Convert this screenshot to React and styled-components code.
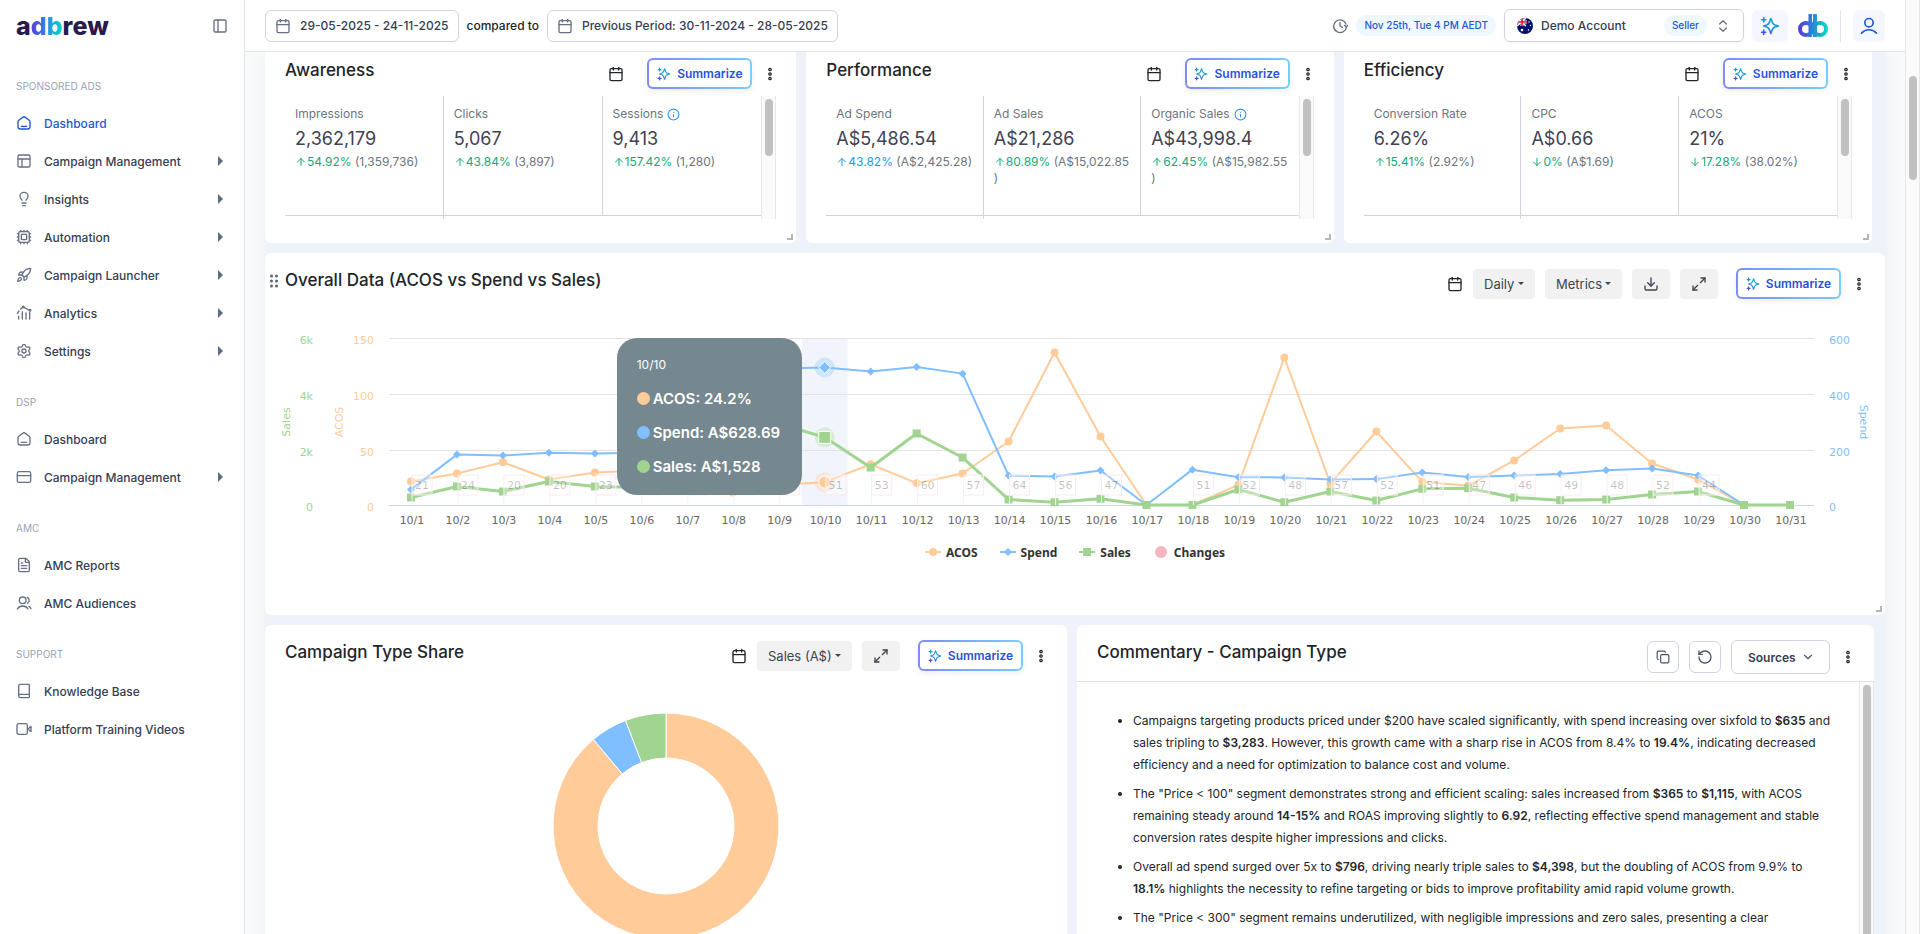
import React, { useLayoutEffect, useRef, useState } from 'react'
import styled, { createGlobalStyle } from 'styled-components'
import {
  ArrowDown,
  ArrowUp,
  Book,
  Calendar,
  ChevronDown,
  ChevronsUpDown,
  Copy,
  Cpu,
  Download,
  FileText,
  Info,
  Lightbulb,
  Maximize2,
  PanelLeft,
  PanelsTopLeft,
  Rocket,
  RotateCcw,
  Settings,
} from 'lucide-react'

const GlobalStyle = createGlobalStyle`
* {
  box-sizing: border-box;
}
body {
  margin: 0;
  font-family: Inter, "Liberation Sans", sans-serif;
  color: #212529;
}
button, select {
  font-family: inherit;
  margin: 0;
}
`

/* ---------- icons ---------- */

const stroke = {
  fill: 'none',
  stroke: 'currentColor',
  strokeWidth: 2,
  strokeLinecap: 'round',
  strokeLinejoin: 'round',
}

function HomeIcon() {
  return (
    <svg width="16" height="16" viewBox="0 0 24 24" {...stroke} aria-hidden="true">
      <path d="M8 17h8M11 2.8 4.2 8C3.4 8.7 3 9.300 3 10.500V17.800C3 20.300 3.700 21 6.200 21h11.600c2.500 0 3.200-.7 3.200-3.200v-7.300c0-1.200-.4-1.800-1.200-2.500L13 2.800c-.7-.6-1.300-.6-2 0z" />
    </svg>
  )
}

function CardIcon() {
  return (
    <svg width="16" height="16" viewBox="0 0 24 24" {...stroke} aria-hidden="true">
      <rect x="2" y="4" width="20" height="16" rx="2.500" />
      <path d="M2 10h20" />
    </svg>
  )
}

function AnalyticsIcon() {
  return (
    <svg width="16" height="16" viewBox="0 0 24 24" {...stroke} aria-hidden="true">
      <path d="M4 21v-4M9.500 21V10M15 21v-9M20.500 21V11M2 12.500 4.500 9M7 6l3-2.500M13 4l6 3.500" />
      <circle cx="11" cy="3" r="1.300" />
      <circle cx="21" cy="8" r="1.300" />
    </svg>
  )
}

function AudienceIcon() {
  return (
    <svg width="16" height="16" viewBox="0 0 24 24" {...stroke} aria-hidden="true">
      <circle cx="10" cy="8" r="5" />
      <path d="M17 3.500a5 5 0 0 1 0 9M2 21c1.500-3 4.500-4.500 8-4.500s6.500 1.500 8 4.500M19.500 17c1.300.8 2.300 2 3 3.500" />
    </svg>
  )
}

function VideoIcon() {
  return (
    <svg width="16" height="16" viewBox="0 0 24 24" {...stroke} aria-hidden="true">
      <rect x="1.500" y="4" width="15.500" height="16" rx="2.500" />
      <path d="m18 12 4.500-4v8z" />
    </svg>
  )
}

function ClockIcon() {
  return (
    <svg width="16" height="16" viewBox="0 0 24 24" {...stroke} aria-hidden="true">
      <path d="M21.500 13.500a9.500 9.500 0 1 1-.5-4.500M23.500 11l-2.200 2.500L18.800 11M12 6.500V12l3.500 2" />
    </svg>
  )
}

function ProfileIcon() {
  return (
    <svg width="20" height="20" viewBox="0 0 24 24" {...stroke} aria-hidden="true">
      <circle cx="12" cy="8" r="5" />
      <path d="M3 20.500c2.300-2.500 5.500-4 9-4s6.700 1.500 9 4" />
    </svg>
  )
}

function SparkIcon({ size = 16, id }) {
  return (
    <svg width={size} height={size} viewBox="0 0 24 24" aria-hidden="true">
      <defs>
        <linearGradient id={id} x1="0" y1="24" x2="16" y2="4" gradientUnits="userSpaceOnUse">
          <stop offset="0" stopColor="#5b21e6" />
          <stop offset="0.500" stopColor="#2f86d8" />
          <stop offset="1" stopColor="#06a8cf" />
        </linearGradient>
      </defs>
      <path
        d="M4.500 22v-5M4.500 7V2M2 4.500h5M2 19.500h5M13 3l-1.700 4.500c-.4 1-.6 1.300-1.500 2.200-.6.600-1 .8-1.800 1.100L4.500 12 8 13.200c.8.300 1.200.5 1.800 1.100.900.900 1.100 1.200 1.500 2.200L13 21l1.700-4.500c.4-1 .6-1.300 1.500-2.200.6-.6 1-.8 1.800-1.100L22 12l-4-1.200c-.8-.3-1.200-.5-1.800-1.100-.9-.9-1.100-1.200-1.500-2.200z"
        fill="none"
        stroke={`url(#${id})`}
        strokeWidth="2"
        strokeLinecap="round"
        strokeLinejoin="round"
      />
    </svg>
  )
}

function BrandMark() {
  return (
    <Mark width="30" height="24" viewBox="0 0 30 24" aria-hidden="true">
      <defs>
        <linearGradient id="mark" x1="0" y1="0" x2="30" y2="0" gradientUnits="userSpaceOnUse">
          <stop offset="0" stopColor="#5a35e0" />
          <stop offset="0.450" stopColor="#2e7fd6" />
          <stop offset="1" stopColor="#05e0c8" />
        </linearGradient>
      </defs>
      <g fill="none" stroke="url(#mark)" strokeWidth="4">
        <circle cx="8" cy="15" r="6" />
        <circle cx="22" cy="15" r="6" />
      </g>
      <g fill="url(#mark)">
        <rect x="10.500" y="0" width="3.500" height="23" rx=".5" />
        <rect x="15" y="0" width="4" height="23" rx=".5" />
        <path d="M13 7l4 3v8l-4 4z" />
      </g>
    </Mark>
  )
}

function FlagIcon() {
  return (
    <svg width="16" height="16" viewBox="0 0 16 16" aria-hidden="true">
      <clipPath id="flag">
        <circle cx="8" cy="8" r="8" />
      </clipPath>
      <g clipPath="url(#flag)">
        <rect width="16" height="16" fill="#00106b" />
        <path d="M0 0l9 8M9 0 0 8" stroke="#fff" strokeWidth="1.500" />
        <path d="M5 0v8M0 4h10" stroke="#fff" strokeWidth="3" />
        <path d="M5 0v8M0 4h10" stroke="#e0162b" strokeWidth="1.600" />
        <circle cx="5" cy="12" r="1.300" fill="#fff" />
        <circle cx="12" cy="4" r=".7" fill="#fff" />
        <circle cx="13.500" cy="7.500" r=".7" fill="#fff" />
        <circle cx="11.500" cy="12" r=".8" fill="#fff" />
      </g>
    </svg>
  )
}

function DotsIcon() {
  return (
    <svg width="4" height="14" viewBox="0 0 4 14" fill="none" stroke="#212529" strokeWidth="1.300" aria-hidden="true">
      <circle cx="2" cy="2.500" r="1.200" />
      <circle cx="2" cy="7" r="1.200" />
      <circle cx="2" cy="11.500" r="1.200" />
    </svg>
  )
}

/* ---------- sidebar ---------- */

const menu = [
  {
    label: 'SPONSORED ADS',
    items: [
      { text: 'Dashboard', icon: <HomeIcon />, active: true },
      { text: 'Campaign Management', icon: <PanelsTopLeft size={16} />, more: true },
      { text: 'Insights', icon: <Lightbulb size={16} />, more: true },
      { text: 'Automation', icon: <Cpu size={16} />, more: true },
      { text: 'Campaign Launcher', icon: <Rocket size={16} />, more: true },
      { text: 'Analytics', icon: <AnalyticsIcon />, more: true },
      { text: 'Settings', icon: <Settings size={16} />, more: true },
    ],
  },
  {
    label: 'DSP',
    items: [
      { text: 'Dashboard', icon: <HomeIcon /> },
      { text: 'Campaign Management', icon: <CardIcon />, more: true },
    ],
  },
  {
    label: 'AMC',
    items: [
      { text: 'AMC Reports', icon: <FileText size={16} /> },
      { text: 'AMC Audiences', icon: <AudienceIcon /> },
    ],
  },
  {
    label: 'SUPPORT',
    items: [
      { text: 'Knowledge Base', icon: <Book size={16} /> },
      { text: 'Platform Training Videos', icon: <VideoIcon /> },
    ],
  },
]

function SideMenu() {
  return (
    <Sidebar>
      <SidebarTop>
        <Wordmark href="#">
          a<Tint>db</Tint>rew
        </Wordmark>
        <PlainButton aria-label="Collapse sidebar">
          <PanelLeft size={16} color="#667085" />
        </PlainButton>
      </SidebarTop>
      <nav>
        {menu.map((group) => (
          <MenuGroup key={group.label}>
            <MenuLabel>{group.label}</MenuLabel>
            {group.items.map((item) => (
              <MenuLink key={item.text} href="#" $active={item.active}>
                {item.icon}
                <MenuText>{item.text}</MenuText>
                {item.more && <MoreArrow />}
              </MenuLink>
            ))}
          </MenuGroup>
        ))}
      </nav>
    </Sidebar>
  )
}

/* ---------- top bar ---------- */

function TopBar() {
  return (
    <Topbar>
      <DateButton>
        <Calendar size={16} color="#667085" />
        29-05-2025 - 24-11-2025
      </DateButton>
      <Compared>compared to</Compared>
      <DateButton>
        <Calendar size={16} color="#667085" />
        Previous Period: 30-11-2024 - 28-05-2025
      </DateButton>
      <TopRight>
        <ClockIcon />
        <Pill>Nov 25th, Tue 4 PM AEDT</Pill>
        <AccountBox>
          <FlagIcon />
          <AccountSelect aria-label="Account">
            <option>Demo Account</option>
          </AccountSelect>
          <Pill>Seller</Pill>
          <ChevronsUpDown size={16} color="#667085" />
        </AccountBox>
        <SoftButton $width={36} aria-label="Assistant">
          <SparkIcon size={20} id="spark-top" />
        </SoftButton>
        <BrandMark />
        <Divider />
        <SoftButton $width={32} aria-label="Profile">
          <ProfileIcon />
        </SoftButton>
      </TopRight>
    </Topbar>
  )
}

/* ---------- cards ---------- */

function Summarize({ id, $wide }) {
  return (
    <SummarizeButton $wide={$wide}>
      <SparkIcon size={14} id={id} />
      Summarize
    </SummarizeButton>
  )
}

function MoreButton() {
  return (
    <PlainButton aria-label="More options">
      <DotsIcon />
    </PlainButton>
  )
}

const metrics = [
  {
    title: 'Awareness',
    items: [
      { name: 'Impressions', value: '2,362,179', delta: '54.92%', prev: '(1,359,736)' },
      { name: 'Clicks', value: '5,067', delta: '43.84%', prev: '(3,897)' },
      { name: 'Sessions', value: '9,413', delta: '157.42%', prev: '(1,280)', info: true },
    ],
  },
  {
    title: 'Performance',
    items: [
      { name: 'Ad Spend', value: 'A$5,486.54', delta: '43.82%', prev: '(A$2,425.28)', color: '#119ef0' },
      { name: 'Ad Sales', value: 'A$21,286', delta: '80.89%', prev: '(A$15,022.85)' },
      { name: 'Organic Sales', value: 'A$43,998.4', delta: '62.45%', prev: '(A$15,982.55)', info: true },
    ],
  },
  {
    title: 'Efficiency',
    items: [
      { name: 'Conversion Rate', value: '6.26%', delta: '15.41%', prev: '(2.92%)' },
      { name: 'CPC', value: 'A$0.66', down: true, delta: '0%', prev: '(A$1.69)' },
      { name: 'ACOS', value: '21%', down: true, delta: '17.28%', prev: '(38.02%)' },
    ],
  },
]

function MetricCard({ data }) {
  return (
    <Card $flat>
      <CardHead $tight>
        <Title>{data.title}</Title>
        <Tools>
          <PlainButton aria-label="Choose dates">
            <Calendar size={16} />
          </PlainButton>
          <Summarize id={`spark-${data.title}`} $wide />
          <MoreButton />
        </Tools>
      </CardHead>
      <MetricArea>
        <MetricGrid>
          {data.items.map((m) => (
            <Metric key={m.name}>
              <MetricName>
                {m.name}
                {m.info && <Info size={13} color="#2f8fff" />}
              </MetricName>
              <MetricValue>{m.value}</MetricValue>
              <MetricDelta>
                <Delta $color={m.color}>
                  {m.down ? <ArrowDown size={12} /> : <ArrowUp size={12} />}
                  {m.delta}
                </Delta>
                {'\u00a0'}
                {m.prev}
              </MetricDelta>
            </Metric>
          ))}
          <Metric $next />
        </MetricGrid>
        <Track>
          <Thumb $height={57} />
        </Track>
      </MetricArea>
      <ResizeCorner />
    </Card>
  )
}

/* ---------- line chart ---------- */

const acos = [21.1, 28.3, 38.4, 22.9, 29.2, 31, 20, 11.2, 18, 20.5, 36.6, 19.6, 28.3, 57, 137, 61.5, 0, 0, 18.1, 132.5, 19.3, 66, 20.8, 17.2, 40, 68.7, 71.4, 37.3, 22.9, 0, 0]
const spend = [56, 181, 178, 188, 185, 188, 190, 400, 490, 494, 480, 496, 472, 106, 102, 124, 0, 127, 100, 99, 92, 93, 117, 101, 106, 111, 125, 131, 106, 0, 0]
const sales = [270, 665, 485, 845, 665, 630, 600, 1500, 2930, 2430, 1345, 2570, 1705, 197, 100, 223, 0, 0, 556, 100, 485, 160, 580, 603, 270, 172, 197, 377, 485, 0, 0]
const changes = [21, 24, 20, 20, 23, 31, 38, 44, 47, 51, 53, 60, 57, 64, 56, 47, null, 51, 52, 48, 57, 52, 51, 47, 46, 49, 48, 52, 44, null, null]

const ORANGE = '#ffcb99'
const BLUE = '#80bfff'
const GREEN = '#a0d490'

const plot = { left: 123, right: 72, top: 39, bottom: 206 }
const rows = [39, 95, 151, 206]
const hovered = 9

function Marker({ shape, x, y, color, r = 4, outline }) {
  const line = outline ? { stroke: '#fff', strokeWidth: 1 } : {}
  if (shape === 'circle') return <circle cx={x} cy={y} r={r} fill={color} {...line} />
  if (shape === 'square') return <rect x={x - r} y={y - r} width={r * 2} height={r * 2} fill={color} {...line} />
  return <path d={`M${x} ${y - r}L${x + r} ${y}L${x} ${y + r}L${x - r} ${y}Z`} fill={color} {...line} />
}

function useWidth() {
  const ref = useRef(null)
  const [width, setWidth] = useState(0)
  useLayoutEffect(() => {
    const measure = () => setWidth(ref.current.clientWidth)
    measure()
    window.addEventListener('resize', measure)
    return () => window.removeEventListener('resize', measure)
  }, [])
  return [ref, width]
}

function OverallChart() {
  const [ref, width] = useWidth()
  const step = (width - plot.left - plot.right) / acos.length
  const px = (i) => plot.left + step * (i + 0.5)
  const py = (v, max) => plot.bottom - (v / max) * (plot.bottom - plot.top)
  const series = [
    { data: acos, max: 150, color: ORANGE, shape: 'circle', w: 2 },
    { data: spend, max: 600, color: BLUE, shape: 'diamond', w: 2 },
    { data: sales, max: 6000, color: GREEN, shape: 'square', w: 3 },
  ]
  const end = width - plot.right + 1

  return (
    <ChartBox ref={ref}>
      {width > 0 && (
        <ChartSvg width={width} height="236" role="img" aria-label="ACOS, Spend and Sales by day">
          <rect x={px(hovered) - step / 2} y={plot.top} width={step} height={plot.bottom - plot.top} fill="#f1f5fb" />
          {rows.map((y, i) => (
            <path key={y} d={`M${plot.left + 1} ${y + 0.5}H${end}`} stroke={i === 3 ? '#ccd6eb' : '#e4e4e4'} />
          ))}
          {rows.map((y, i) => (
            <g key={y}>
              <text x="48" y={y + 6} textAnchor="end" fill={GREEN}>{['6k', '4k', '2k', '0'][i]}</text>
              <text x="109" y={y + 6} textAnchor="end" fill={ORANGE}>{[150, 100, 50, 0][i]}</text>
              <text x={end + 15} y={y + 6} fill={BLUE}>{[600, 400, 200, 0][i]}</text>
            </g>
          ))}
          <text transform="translate(25 123) rotate(-90)" textAnchor="middle" fill={GREEN}>Sales</text>
          <text transform="translate(78 123) rotate(-90)" textAnchor="middle" fill={ORANGE}>ACOS</text>
          <text transform={`translate(${width - 25} 123) rotate(90)`} textAnchor="middle" fill={BLUE}>Spend</text>
          {acos.map((_, i) => (
            <text key={i} x={px(i) + 1} y="225" textAnchor="middle" fill="#666">{`10/${i + 1}`}</text>
          ))}
          {series.map((s) => (
            <g key={s.color}>
              <polyline
                points={s.data.map((v, i) => `${px(i)},${py(v, s.max)}`).join(' ')}
                fill="none"
                stroke={s.color}
                strokeWidth={s.w}
                strokeLinejoin="round"
              />
              {s.data.map((v, i) =>
                i === hovered ? (
                  <g key={i}>
                    <circle cx={px(i)} cy={py(v, s.max)} r="10" fill={s.color} opacity=".3" />
                    <Marker shape={s.shape} x={px(i)} y={py(v, s.max)} color={s.color} r={6} outline />
                  </g>
                ) : (
                  <Marker key={i} shape={s.shape} x={px(i)} y={py(v, s.max)} color={s.color} />
                ),
              )}
            </g>
          ))}
          {changes.map((c, i) =>
            c === null ? null : (
              <g key={i}>
                <path d={`M${px(i) + 1} 196V206`} stroke="#fdeef1" />
                <rect x={px(i) + 1} y="176" width="20" height="20" fill="#fff" fillOpacity=".3" stroke="#fdeaee" />
                <text x={px(i) + 11} y="190" textAnchor="middle" fill="#000" fillOpacity=".25">{c}</text>
              </g>
            ),
          )}
        </ChartSvg>
      )}
      <Tooltip style={{ right: width - px(hovered) + step / 2 }}>
        <TooltipDate>10/10</TooltipDate>
        <TooltipRow><Bullet $color={ORANGE} />ACOS: 24.2%</TooltipRow>
        <TooltipRow><Bullet $color={BLUE} />Spend: A$628.69</TooltipRow>
        <TooltipRow><Bullet $color={GREEN} />Sales: A$1,528</TooltipRow>
      </Tooltip>
    </ChartBox>
  )
}

function LegendEntry({ shape, color, children }) {
  return (
    <LegendItem>
      <svg width="16" height="12" viewBox="0 0 16 12" aria-hidden="true">
        {children !== 'Changes' && <path d="M0 6H16" stroke={color} strokeWidth="2" />}
        <Marker shape={shape} x={8} y={6} color={color} r={children === 'Changes' ? 6 : 4} />
      </svg>
      {children}
    </LegendItem>
  )
}

function OverallCard() {
  return (
    <Card>
      <CardHead>
        <DragHandle width="8" height="14" viewBox="0 0 8 14" aria-hidden="true">
          {[2, 7, 12].map((y) => (
            <g key={y}>
              <circle cx="1.500" cy={y} r="1.500" />
              <circle cx="6.500" cy={y} r="1.500" />
            </g>
          ))}
        </DragHandle>
        <Title>Overall Data (ACOS vs Spend vs Sales)</Title>
        <Tools>
          <PlainButton aria-label="Choose dates">
            <Calendar size={16} />
          </PlainButton>
          <GreySelect $width={62} aria-label="Interval">
            <option>Daily</option>
          </GreySelect>
          <GreySelect $width={77} aria-label="Metrics">
            <option>Metrics</option>
          </GreySelect>
          <GreyButton aria-label="Download">
            <Download size={16} />
          </GreyButton>
          <GreyButton aria-label="Expand">
            <Maximize2 size={16} />
          </GreyButton>
          <Summarize id="spark-overall" />
          <MoreButton />
        </Tools>
      </CardHead>
      <OverallChart />
      <Legend>
        <LegendEntry shape="circle" color={ORANGE}>ACOS</LegendEntry>
        <LegendEntry shape="diamond" color={BLUE}>Spend</LegendEntry>
        <LegendEntry shape="square" color={GREEN}>Sales</LegendEntry>
        <LegendEntry shape="circle" color="#f4b5c3">Changes</LegendEntry>
      </Legend>
      <ResizeCorner />
    </Card>
  )
}

/* ---------- donut ---------- */

const shares = [
  { from: 0, to: 320, color: ORANGE },
  { from: 320, to: 339, color: BLUE },
  { from: 339, to: 360, color: GREEN },
]

function arc(from, to, outer, inner) {
  const at = (deg, r) => {
    const a = (deg * Math.PI) / 180
    return `${114 + r * Math.sin(a)} ${114 - r * Math.cos(a)}`
  }
  const large = to - from > 180 ? 1 : 0
  return `M${at(from, outer)}A${outer} ${outer} 0 ${large} 1 ${at(to, outer)}L${at(to, inner)}A${inner} ${inner} 0 ${large} 0 ${at(from, inner)}Z`
}

function ShareCard() {
  return (
    <Card>
      <CardHead>
        <Title>Campaign Type Share</Title>
        <Tools>
          <PlainButton aria-label="Choose dates">
            <Calendar size={16} />
          </PlainButton>
          <GreySelect $width={95} aria-label="Share metric">
            <option>Sales (A$)</option>
          </GreySelect>
          <GreyButton aria-label="Expand">
            <Maximize2 size={16} />
          </GreyButton>
          <Summarize id="spark-share" />
          <MoreButton />
        </Tools>
      </CardHead>
      <DonutBox>
        <svg width="228" height="228" viewBox="0 0 228 228" role="img" aria-label="Campaign type share">
          {shares.map((s) => (
            <path key={s.color} d={arc(s.from, s.to, 113, 68)} fill={s.color} stroke="#fff" />
          ))}
        </svg>
      </DonutBox>
    </Card>
  )
}

/* ---------- commentary ---------- */

function CommentaryCard() {
  return (
    <Card>
      <CardHead $line>
        <Title>Commentary - Campaign Type</Title>
        <Tools>
          <OutlineButton aria-label="Copy">
            <Copy size={14} />
          </OutlineButton>
          <OutlineButton aria-label="Regenerate">
            <RotateCcw size={16} />
          </OutlineButton>
          <SourcesBox>
            <SourcesSelect aria-label="Sources">
              <option>Sources</option>
            </SourcesSelect>
            <ChevronDown size={14} />
          </SourcesBox>
          <MoreButton />
        </Tools>
      </CardHead>
      <CommentaryBody>
        <Points>
          <li>
            Campaigns targeting products priced under $200 have scaled significantly, with spend increasing over
            sixfold to <b>$635</b> and sales tripling to <b>$3,283</b>. However, this growth came with a sharp rise
            in ACOS from 8.4% to <b>19.4%</b>, indicating decreased efficiency and a need for optimization to
            balance cost and volume.
          </li>
          <li>
            The "Price &lt; 100" segment demonstrates strong and efficient scaling: sales increased from{' '}
            <b>$365</b> to <b>$1,115</b>, with ACOS remaining steady around <b>14-15%</b> and ROAS improving slightly
            to <b>6.92</b>, reflecting effective spend management and stable conversion rates despite higher
            impressions and clicks.
          </li>
          <li>
            Overall ad spend surged over 5x to <b>$796</b>, driving nearly triple sales to <b>$4,398</b>, but the
            doubling of ACOS from 9.9% to <b>18.1%</b> highlights the necessity to refine targeting or bids to
            improve profitability amid rapid volume growth.
          </li>
          <li>
            The "Price &lt; 300" segment remains underutilized, with negligible impressions and zero sales,
            presenting a clear
          </li>
        </Points>
        <Track>
          <Thumb $height={320} />
        </Track>
      </CommentaryBody>
    </Card>
  )
}

function App() {
  return (
    <>
      <GlobalStyle />
      <Page>
        <SideMenu />
        <Main>
          <TopBar />
          <Scroller>
            <Board>
              <MetricRow>
                {metrics.map((m) => (
                  <MetricCard key={m.title} data={m} />
                ))}
              </MetricRow>
              <OverallCard />
              <BottomRow>
                <ShareCard />
                <CommentaryCard />
              </BottomRow>
            </Board>
          </Scroller>
        </Main>
        <PageTrack>
          <Thumb $height={104} />
        </PageTrack>
      </Page>
    </>
  )
}

export default App

const Page = styled.div`
  display: flex;
  height: 100vh;
  overflow: hidden;
  background: #f9fafb;
`
const Sidebar = styled.aside`
  flex: none;
  width: 245px;
  background: #fff;
  border-right: 1px solid #e2e4e8;
`
const SidebarTop = styled.div`
  display: flex;
  align-items: center;
  justify-content: space-between;
  height: 52px;
  padding: 0 16px;
`
const Wordmark = styled.a`
  font-size: 25px;
  font-weight: 800;
  line-height: 32px;
  color: #261a4f;
  text-decoration: none;
`
const Tint = styled.span`
  background: linear-gradient(90deg, #5b3be0, #2e8be0 50%, #05dcc9);
  background-clip: text;
  color: transparent;
`
const Mark = styled.svg`
  margin-left: 2px;
`
const PlainButton = styled.button`
  display: flex;
  align-items: center;
  justify-content: center;
  width: 16px;
  height: 16px;
  padding: 0;
  border: 0;
  background: none;
  color: #212529;
`
const MenuGroup = styled.div`
  padding: 22px 16px 0;
  &:not(:first-child) {
    padding-top: 20px;
  }
`
const MenuLabel = styled.div`
  height: 24px;
  margin-bottom: 6px;
  font-size: 10px;
  line-height: 24px;
  color: #98a2b3;
`
const MenuLink = styled.a`
  display: flex;
  align-items: center;
  gap: 12px;
  height: 38px;
  color: ${(p) => (p.$active ? '#1d56d8' : '#667085')};
  text-decoration: none;
  span {
    color: ${(p) => (p.$active ? '#1d56d8' : '#344054')};
  }
`
const MenuText = styled.span`
  flex: 1;
  font-size: 12px;
  font-weight: 500;
`
const MoreArrow = styled.i`
  margin-right: 5px;
  border: 5px solid transparent;
  border-left-color: #5d6b85;
  border-right: 0;
`
const Main = styled.main`
  flex: 1;
  display: flex;
  flex-direction: column;
  min-width: 0;
`
const Topbar = styled.header`
  flex: none;
  display: flex;
  align-items: center;
  height: 52px;
  padding: 0 20px;
  background: #fff;
  border-bottom: 1px solid #e2e4e8;
`
const DateButton = styled.button`
  display: flex;
  align-items: center;
  gap: 9px;
  height: 32px;
  padding: 0 9px;
  border: 1px solid #d0d5dd;
  border-radius: 6px;
  background: #fff;
  color: #344054;
  font-size: 12px;
  font-weight: 500;
`
const Compared = styled.span`
  margin: 0 8px;
  font-size: 12px;
  font-weight: 500;
`
const TopRight = styled.div`
  display: flex;
  align-items: center;
  gap: 8px;
  margin-left: auto;
  color: #667085;
`
const Pill = styled.span`
  padding: 0 8px;
  border-radius: 11px;
  background: #eff8ff;
  color: #2457d6;
  font-size: 10px;
  font-weight: 500;
  line-height: 21px;
  white-space: nowrap;
`
const AccountBox = styled.label`
  display: flex;
  align-items: center;
  gap: 8px;
  width: 240px;
  height: 33px;
  padding: 0 12px;
  border: 1px solid #d0d5dd;
  border-radius: 6px;
  box-shadow: 0 1px 2px rgba(16, 24, 40, 0.05);
`
const AccountSelect = styled.select`
  flex: 1;
  min-width: 0;
  padding: 0;
  appearance: none;
  border: 0;
  background: none;
  color: #344054;
  font-size: 12px;
  font-weight: 500;
`
const SoftButton = styled.button`
  display: flex;
  align-items: center;
  justify-content: center;
  width: ${(p) => p.$width}px;
  height: 32px;
  padding: 0;
  border: 0;
  border-radius: 6px;
  background: #f4f7ff;
  color: #2457d6;
`
const Divider = styled.span`
  width: 1px;
  height: 32px;
  margin: 0 4px;
  background: #e4e7ec;
`
const Scroller = styled.div`
  flex: 1;
  min-height: 0;
  padding: 0 20px;
  overflow: hidden;
`
const Board = styled.div`
  display: flex;
  flex-direction: column;
  gap: 10px;
  background: #edf3f8;
  box-shadow: 0 0 20px rgba(16, 24, 40, 0.06);
`
const MetricRow = styled.div`
  display: grid;
  grid-template-columns: 532fr 528fr 529fr;
  gap: 10px;
  padding-right: 13px;
`
const BottomRow = styled.div`
  display: grid;
  grid-template-columns: 802fr 797fr;
  gap: 10px;
  padding-right: 11px;
`
const Card = styled.section`
  position: relative;
  min-width: 0;
  background: #fff;
  border-radius: ${(p) => (p.$flat ? '0 0 6px 6px' : '6px')};
`
const CardHead = styled.div`
  display: flex;
  align-items: flex-start;
  justify-content: space-between;
  height: ${(p) => (p.$tight ? 44 : p.$line ? 57 : 46)}px;
  padding: ${(p) => (p.$tight ? 6 : 15)}px 18px 0 20px;
  border-bottom: ${(p) => (p.$line ? '1px solid #dee2e6' : '0')};
`
const Title = styled.h2`
  margin: 0;
  font-size: 17px;
  font-weight: 500;
  line-height: 25px;
  white-space: nowrap;
`
const Tools = styled.div`
  display: flex;
  align-items: center;
  gap: 10px;
`
const SummarizeButton = styled.button`
  display: flex;
  align-items: center;
  justify-content: center;
  gap: 6px;
  width: 105px;
  height: 31px;
  margin-left: ${(p) => (p.$wide ? 13 : 8)}px;
  padding: 0;
  border: 2px solid transparent;
  border-radius: 6px;
  background: linear-gradient(#fff, #fff) padding-box, linear-gradient(90deg, #7f8bf9, #78cdff) border-box;
  box-shadow: 0 2px 6px rgba(16, 24, 40, 0.08);
  color: #2952d9;
  font-size: 12px;
  font-weight: 600;
`
const MetricArea = styled.div`
  display: flex;
  height: 123px;
  margin: 0 20px 24px;
  overflow: hidden;
`
const MetricGrid = styled.div`
  flex: 1;
  display: grid;
  grid-template-columns: repeat(3, 1fr);
  grid-template-rows: 120px 3px;
  min-width: 0;
`
const Metric = styled.div`
  min-width: 0;
  padding: ${(p) => (p.$next ? 0 : '10px 9px 0 10px')};
  border: 0 solid #d0d3dc;
  border-right-width: 1px;
  border-bottom-width: ${(p) => (p.$next ? 0 : 1)}px;
  &:nth-child(3) {
    border-right-width: 0;
  }
`
const MetricName = styled.div`
  display: flex;
  align-items: center;
  gap: 4px;
  height: 16px;
  margin-bottom: 4px;
  font-size: 12px;
  line-height: 16px;
  color: #6c757d;
`
const MetricValue = styled.div`
  margin-bottom: 2px;
  font-size: 18px;
  line-height: 26px;
  color: #3f4254;
`
const MetricDelta = styled.div`
  font-size: 12px;
  line-height: 16px;
  color: #6c757d;
  overflow-wrap: anywhere;
`
const Delta = styled.span`
  color: ${(p) => p.$color || '#12a87b'};
  svg {
    float: left;
    margin-top: 2px;
  }
`
const Track = styled.div`
  flex: none;
  width: 15px;
  padding: 3px 3px 0;
  background: #fafafa;
  border: 0 solid #e8e8e8;
  border-width: 0 1px;
`
const PageTrack = styled(Track)`
  padding-top: 76px;
`
const Thumb = styled.div`
  width: 8px;
  height: ${(p) => p.$height}px;
  border-radius: 4px;
  background: #c1c1c1;
`
const ResizeCorner = styled.span`
  position: absolute;
  right: 3px;
  bottom: 3px;
  width: 6px;
  height: 6px;
  border: 0 solid #b5b5b5;
  border-width: 0 2px 2px 0;
`
const DragHandle = styled.svg`
  position: absolute;
  left: 5px;
  top: 21px;
  fill: #5b6270;
`
const GreySelect = styled.select`
  width: ${(p) => p.$width}px;
  height: 30px;
  padding: 0 0 0 11px;
  appearance: none;
  border: 0;
  border-radius: 4px;
  color: #3c4450;
  font-size: 13px;
  background: #f1f1f1
    url("data:image/svg+xml,%3Csvg xmlns='http://www.w3.org/2000/svg' width='6' height='3'%3E%3Cpath d='M0 0h6L3 3z' fill='%233c4450'/%3E%3C/svg%3E")
    no-repeat right 11px center;
`
const GreyButton = styled.button`
  display: flex;
  align-items: center;
  justify-content: center;
  width: 38px;
  height: 30px;
  padding: 0;
  border: 0;
  border-radius: 4px;
  background: #f1f1f1;
  color: #3c4450;
`
const ChartBox = styled.div`
  position: relative;
  height: 236px;
`
const ChartSvg = styled.svg`
  display: block;
  font-family: "DejaVu Sans", sans-serif;
  font-size: 11px;
`
const Tooltip = styled.div`
  position: absolute;
  top: 39px;
  width: 185px;
  height: 157px;
  padding: 18px 20px 0;
  border-radius: 20px;
  background: #75888f;
  color: #fff;
`
const TooltipDate = styled.div`
  margin-bottom: 7px;
  font-size: 12px;
  line-height: 18px;
`
const TooltipRow = styled.div`
  display: flex;
  align-items: center;
  gap: 3px;
  height: 34px;
  font-size: 15px;
  font-weight: 600;
  white-space: nowrap;
`
const Bullet = styled.span`
  width: 13px;
  height: 13px;
  border-radius: 50%;
  background: ${(p) => p.$color};
`
const Legend = styled.div`
  display: flex;
  justify-content: center;
  gap: 22px;
  height: 80px;
  padding-top: 9px;
`
const LegendItem = styled.span`
  display: flex;
  align-items: center;
  gap: 5px;
  height: 16px;
  font-family: "Noto Sans", sans-serif;
  font-size: 12px;
  font-weight: 700;
  color: #333;
`
const DonutBox = styled.div`
  display: flex;
  justify-content: center;
  padding: 41px 0 60px;
`
const OutlineButton = styled.button`
  display: flex;
  align-items: center;
  justify-content: center;
  width: 32px;
  height: 32px;
  padding: 0;
  border: 1px solid #d0d5dd;
  border-radius: 6px;
  background: #fff;
  color: #475467;
`
const SourcesBox = styled.label`
  display: flex;
  align-items: center;
  justify-content: space-between;
  width: 99px;
  height: 34px;
  padding: 0 14px 0 16px;
  border: 1px solid #d0d5dd;
  border-radius: 6px;
  color: #475467;
`
const SourcesSelect = styled.select`
  padding: 0;
  appearance: none;
  border: 0;
  background: none;
  color: #344054;
  font-size: 12px;
  font-weight: 600;
`
const CommentaryBody = styled.div`
  display: flex;
`
const Points = styled.ul`
  flex: 1;
  margin: 0;
  padding: 28px 24px 0 56px;
  font-size: 12px;
  line-height: 22px;
  li {
    margin-bottom: 7px;
  }
  b {
    font-weight: 600;
  }
`
